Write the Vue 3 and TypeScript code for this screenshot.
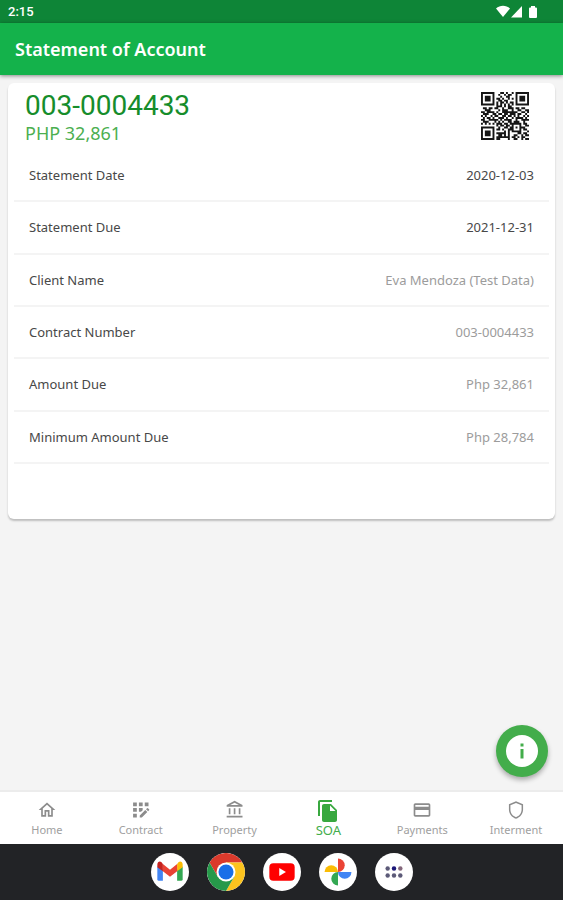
<script setup lang="ts">
interface Detail {
  label: string
  value: string
  strong?: boolean
}

interface Tab {
  label: string
  path: string
  active?: boolean
}

const details: Detail[] = [
  { label: 'Statement Date', value: '2020-12-03', strong: true },
  { label: 'Statement Due', value: '2021-12-31', strong: true },
  { label: 'Client Name', value: 'Eva Mendoza (Test Data)' },
  { label: 'Contract Number', value: '003-0004433' },
  { label: 'Amount Due', value: 'Php 32,861' },
  { label: 'Minimum Amount Due', value: 'Php 28,784' },
]

const tabs: Tab[] = [
  {
    label: 'Home',
    path: 'M12 5.69l5 4.5V18h-2v-6H9v6H7v-7.81l5-4.5M12 3L2 12h3v8h6v-6h2v6h6v-8h3L12 3z',
  },
  {
    label: 'Contract',
    path: 'M2.500 3h4.500v4.500H2.500zM9.500 3H14v4.500H9.500zM16.500 3H21v4.500h-4.500zM2.500 9.700h4.500v4.500H2.500zM2.500 16.500h4.500V21H2.500zM9.500 9.700H14v2.500l-2 2H9.500zM10.500 18.500V21H13l6.600-6.600-2.500-2.500zM21.700 11.200l-1.400-1.400a.7.7 0 0 0-1 0l-1.300 1.300 2.500 2.500 1.200-1.300a.8.8 0 0 0 0-1.100z',
  },
  {
    label: 'Property',
    path: 'M6.5 10h-2v7h2v-7zm6 0h-2v7h2v-7zm8.5 9H2v2h19v-2zm-2.5-9h-2v7h2v-7zm-7-6.74L16.71 6H6.29l5.21-2.74m0-2.26L2 6v2h19V6l-9.5-5z',
  },
  {
    label: 'SOA',
    active: true,
    path: 'M16 1H4c-1.1 0-2 .9-2 2v14h2V3h12V1zm-1 4l6 6v10c0 1.1-.9 2-2 2H7.99C6.89 23 6 22.1 6 21V7c0-1.1.89-2 1.99-2h7zm-1 7h5.5L14 6.5V12z',
  },
  {
    label: 'Payments',
    path: 'M20 4H4c-1.11 0-1.99.89-1.99 2L2 18c0 1.11.89 2 2 2h16c1.11 0 2-.89 2-2V6c0-1.11-.89-2-2-2zm0 14H4v-6h16v6zm0-10H4V6h16v2z',
  },
  {
    label: 'Interment',
    path: 'M12 1.5L3.5 5v6.5c0 5 3.6 9.700 8.500 11 4.900-1.300 8.500-6 8.500-11V5L12 1.500zm6.700 10c0 4.100-2.700 7.900-6.700 9.100-4-1.200-6.700-5-6.700-9.100V6.300L12 3.500l6.700 2.800v5.200z',
  },
]

const qrRows: string[] = [
  '1111111000110100101111111',
  '1000001001001011001000001',
  '1011101000100110001011101',
  '1011101011010010101011101',
  '1011101001101100001011101',
  '1000001010110101101000001',
  '1111111010101010101111111',
  '0000000011101011000000000',
  '0110110110010011101101100',
  '0011100001011100100110011',
  '1101111010011111111001101',
  '0111001101101101110110010',
  '1010010110011011010100101',
  '0101101001110100101111010',
  '1100111110101111001001111',
  '0111000101010011011100100',
  '1010101011101101111110110',
  '0000000010110110100010011',
  '1111111001001101101011100',
  '1000001011010011100010110',
  '1011101000001010111110001',
  '1011101011111010000110110',
  '1011101001101010011001011',
  '1000001011111110110101100',
  '1111111011000010011001011',
]

const qrPath: string = qrRows
  .map((row, y) =>
    [...row].map((cell, x) => (cell === '1' ? `M${x} ${y}h1v1h-1z` : '')).join(''),
  )
  .join('')
</script>

<template>
  <div class="screen">
    <div class="status">
      <span>2:15</span>
      <svg width="42" height="14" viewBox="0 0 42 14" aria-hidden="true">
        <path d="M0 3.500C4-.2 10-.2 14 3.500L7 12z" />
        <path d="M26 1v11.500H15z" />
        <path d="M35 1h4v1.500h1q1 0 1 1V12q0 1-1 1h-6q-1 0-1-1V3.500q0-1 1-1h1z" />
      </svg>
    </div>
    <header class="appbar">
      <h1>Statement of Account</h1>
    </header>

    <main class="content">
      <section class="card">
        <div class="summary">
          <div>
            <p class="account">003-0004433</p>
            <p class="total">PHP 32,861</p>
          </div>
          <svg class="qr" viewBox="0 0 25 25" role="img" aria-label="QR code">
            <path :d="qrPath" />
          </svg>
        </div>
        <dl class="details">
          <div v-for="item in details" :key="item.label" class="detail">
            <dt>{{ item.label }}</dt>
            <dd :class="{ strong: item.strong }">{{ item.value }}</dd>
          </div>
        </dl>
      </section>
      <button class="fab" type="button" aria-label="Information">
        <svg viewBox="0 0 32 32" aria-hidden="true">
          <circle cx="16" cy="16" r="16" fill="#fff" />
          <path d="M14.500 8.500h3v3h-3zM14.500 14h3v9.500h-3z" fill="#43ad4b" />
        </svg>
      </button>
    </main>

    <nav class="tabs" aria-label="Main">
      <a
        v-for="tab in tabs"
        :key="tab.label"
        href="#"
        class="tab"
        :class="{ active: tab.active }"
        :aria-current="tab.active ? 'page' : undefined"
      >
        <svg viewBox="0 0 24 24" aria-hidden="true"><path :d="tab.path" /></svg>
        <span>{{ tab.label }}</span>
      </a>
    </nav>

    <div class="dock">
      <button type="button" aria-label="Gmail">
        <svg viewBox="0 0 48 48" aria-hidden="true">
          <path d="M8 17v16q0 2 2 2h5V21z" fill="#4285f4" />
          <path d="M33 21v14h5q2 0 2-2V17z" fill="#34a853" />
          <path d="M33 14v9l7-5v-3c0-4-3-5-5-3.500z" fill="#fbbc04" />
          <path d="M15 14l9 7 9-7v9l-9 7-9-7z" fill="#ea4335" />
          <path d="M8 15v3l7 5v-9l-2-2.500C11 10 8 11 8 15z" fill="#c5221f" />
        </svg>
      </button>
      <button type="button" aria-label="Chrome">
        <svg viewBox="0 0 48 48" aria-hidden="true">
          <path d="M3.200 12A24 24 0 0 1 44.800 12H24v12L13.600 30z" fill="#db3a2c" />
          <path d="M44.800 12A24 24 0 0 1 24 48L34.400 30 24 24V12z" fill="#fcc31e" />
          <path d="M24 48A24 24 0 0 1 3.200 12L13.600 30 24 24 34.400 30z" fill="#26994a" />
          <circle cx="24" cy="24" r="12" fill="#fff" />
          <circle cx="24" cy="24" r="9.500" fill="#1a6fe8" />
        </svg>
      </button>
      <button type="button" aria-label="YouTube">
        <svg viewBox="0 0 48 48" aria-hidden="true">
          <rect x="8" y="13" width="32" height="22" rx="5" fill="#f00" />
          <path d="M20.500 19v10l8.500-5z" fill="#fff" />
        </svg>
      </button>
      <button type="button" aria-label="Photos">
        <svg viewBox="0 0 48 48" aria-hidden="true">
          <path d="M24 7a8.500 8.500 0 0 1 0 17z" fill="#ea4335" />
          <path d="M41 24a8.500 8.500 0 0 1-17 0z" fill="#4285f4" />
          <path d="M24 41a8.500 8.500 0 0 1 0-17z" fill="#34a853" />
          <path d="M7 24a8.500 8.500 0 0 1 17 0z" fill="#fbbc04" />
        </svg>
      </button>
      <button type="button" aria-label="All apps">
        <svg viewBox="0 0 48 48" aria-hidden="true">
          <g fill="#5c5a78">
            <circle cx="16" cy="19.500" r="2.800" />
            <circle cx="24" cy="19.500" r="2.800" fill="#1c1878" />
            <circle cx="32" cy="19.500" r="2.800" fill="#85687c" />
            <circle cx="16" cy="28.500" r="2.800" />
            <circle cx="24" cy="28.500" r="2.800" />
            <circle cx="32" cy="28.500" r="2.800" />
          </g>
        </svg>
      </button>
    </div>
  </div>
</template>

<style>
body {
  background: #f4f4f4;
}
</style>

<style scoped>
.screen {
  display: flex;
  flex-direction: column;
  min-height: 100vh;
  background: #f4f4f4;
  font-family: 'Noto Sans', 'Open Sans', sans-serif;
}

h1,
p,
dl,
dd {
  margin: 0;
}

button {
  padding: 0;
  border: 0;
}

.status {
  display: flex;
  align-items: center;
  justify-content: space-between;
  height: 23px;
  padding: 0 25px 0 8px;
  background: #0e8537;
  color: #fff;
  font: 500 13px Roboto, sans-serif;
}

.status svg {
  fill: #fff;
}

.appbar {
  display: flex;
  align-items: center;
  height: 52px;
  padding: 0 15px;
  background: #14b24b;
  box-shadow: 0 1px 4px rgba(0, 0, 0, 0.45);
}

.appbar h1 {
  color: #fff;
  font-size: 18px;
  font-weight: 600;
  line-height: 24px;
}

.content {
  display: flex;
  flex: 1;
  flex-direction: column;
  justify-content: space-between;
  gap: 16px;
  padding: 8px 8px 13px;
}

.card {
  padding: 8px 6px 55px;
  border-radius: 6px;
  background: #fff;
  box-shadow: 0 2px 2px rgba(0, 0, 0, 0.22);
}

.summary {
  display: flex;
  justify-content: space-between;
  padding: 0 20px 4px 11px;
}

.account {
  color: #168d2b;
  font: 400 28px/29px Roboto, sans-serif;
}

.total {
  color: #4caf50;
  font-size: 18px;
  line-height: 26px;
}

.qr {
  width: 48px;
  height: 48px;
  margin-top: 1px;
  fill: #151515;
}

.details {
  display: grid;
  grid-template-rows: repeat(6, 1fr);
  height: 314px;
}

.detail {
  display: flex;
  align-items: center;
  justify-content: space-between;
  gap: 16px;
  padding: 0 15px;
  border-bottom: 2px solid #f4f4f4;
}

.detail dt {
  color: #484848;
  font-size: 13px;
}

.detail dd {
  color: #9c9c9c;
  font-size: 13px;
  text-align: right;
}

.detail dd.strong {
  color: #484848;
}

.fab {
  display: grid;
  place-items: center;
  align-self: flex-end;
  width: 52px;
  height: 52px;
  margin-right: 7px;
  border-radius: 50%;
  background: #43ad4b;
  box-shadow: 0 3px 5px rgba(0, 0, 0, 0.3);
}

.fab svg {
  width: 32px;
  height: 32px;
}

.tabs {
  display: grid;
  grid-template-columns: repeat(6, 1fr);
  height: 52px;
  border-top: 2px solid #ececec;
  background: #fff;
}

.tab {
  display: flex;
  flex-direction: column;
  align-items: center;
  padding-top: 8px;
  color: #a0a0a0;
  font-size: 11px;
  line-height: 20px;
  text-decoration: none;
}

.tab svg {
  width: 20px;
  height: 20px;
  fill: #8c8c8c;
}

.tab.active {
  padding-top: 7px;
  color: #43ad4b;
  font-size: 13px;
}

.tab.active svg {
  width: 24px;
  height: 24px;
  fill: #38a83f;
}

.tab.active span {
  line-height: 14px;
}

.dock {
  display: flex;
  align-items: center;
  justify-content: center;
  gap: 18px;
  height: 56px;
  background: #222326;
}

.dock button {
  width: 38px;
  height: 38px;
  overflow: hidden;
  border-radius: 50%;
  background: #fff;
}

.dock svg {
  display: block;
  width: 100%;
  height: 100%;
}
</style>
